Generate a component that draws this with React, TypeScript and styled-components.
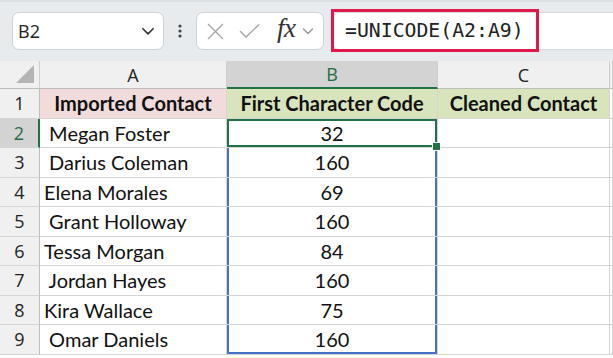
import React from 'react';
import styled, { createGlobalStyle, css } from 'styled-components';

const GlobalStyle = createGlobalStyle`
  html, body {
    margin: 0;
    padding: 0;
    background: #ffffff;
    overflow: hidden;
  }
`;

const Page = styled.div`
  width: 613px;
  height: 358px;
  display: flex;
  flex-direction: column;
  overflow: hidden;
  font-family: 'Lato', 'Noto Sans', sans-serif;
`;

const Toolbar = styled.div`
  height: 61px;
  flex: none;
  box-sizing: border-box;
  background: #e8ebee;
  border-top: 2px solid #dcdfe2;
  display: flex;
  align-items: center;
  padding: 0 0 1px 12px;
`;

const NameBox = styled.div`
  width: 152px;
  height: 38px;
  box-sizing: border-box;
  background: #fff;
  border: 1px solid #cfd2d5;
  border-radius: 7px;
  display: flex;
  align-items: center;
  justify-content: space-between;
  padding: 0 7px 0 5px;
  font-family: 'Open Sans', 'Noto Sans', sans-serif;
  font-size: 18px;
  color: #222;
`;

const Dots = styled.div`
  width: 32px;
  display: flex;
  justify-content: center;
`;

const FxBox = styled.div`
  width: 128px;
  height: 38px;
  box-sizing: border-box;
  background: #fff;
  border: 1px solid #cfd2d5;
  border-radius: 7px;
  display: flex;
  align-items: center;
  padding: 0 0 0 9px;
`;

const ToolIcon = styled.svg<{ $gap?: number }>`
  flex: none;
  margin-left: ${({ $gap }) => $gap || 0}px;
`;

const FxLabel = styled.span`
  font-family: 'Liberation Serif', serif;
  font-style: italic;
  font-size: 27px;
  color: #333;
  margin: -5px 5px 0 17px;
  letter-spacing: -0.5px;
`;

const FormulaBar = styled.div`
  flex: 1;
  height: 38px;
  margin-left: 8px;
  box-sizing: border-box;
  background: #fff;
  border: 1px solid #d6d9dc;
  border-right: none;
  border-radius: 7px 0 0 7px;
  position: relative;
  display: flex;
  align-items: center;
`;

const FormulaHighlight = styled.div`
  position: absolute;
  left: -2px;
  top: -4px;
  width: 208px;
  height: 43px;
  box-sizing: border-box;
  border: 3px solid #e0194b;
  display: flex;
  align-items: center;
  padding-left: 11px;
  font-family: 'DejaVu Sans Mono', 'Liberation Mono', monospace;
  font-size: 19.8px;
  color: #222;
`;

const Sheet = styled.div`
  display: grid;
  grid-template-columns: 40px 187px 211px 172px 1fr;
  grid-template-rows: 28px repeat(9, 29.5px);
`;

type CellKind = 'corner' | 'colHead' | 'rowHead' | 'data';

interface CellProps {
  $kind: CellKind;
  $bg?: string;
  $align?: 'left' | 'center';
  $bold?: boolean;
  $active?: boolean;
  $range?: 'mid' | 'last';
}

const Cell = styled.div<CellProps>`
  position: relative;
  box-sizing: border-box;
  border-right: 1px solid #d4d4d4;
  border-bottom: 1px solid #d4d4d4;
  display: flex;
  align-items: center;
  justify-content: ${({ $align }) => ($align === 'left' ? 'flex-start' : 'center')};
  padding: ${({ $align }) => ($align === 'left' ? '0 0 0 4px' : '0')};
  background: ${({ $bg }) => $bg || '#fff'};
  font-size: 20px;
  font-weight: ${({ $bold }) => ($bold ? 700 : 400)};
  color: #111;
  white-space: pre;
  ${({ $kind }) =>
    ($kind === 'colHead' || $kind === 'corner') &&
    css`
      font-family: 'Open Sans', 'Noto Sans', sans-serif;
      font-size: 18px;
      color: #222;
      border-right-color: #cfcfcf;
      border-bottom: 1px solid #bdbdbd;
    `}
  ${({ $kind }) =>
    $kind === 'rowHead' &&
    css`
      font-family: 'Open Sans', 'Noto Sans', sans-serif;
      font-size: 18px;
      color: #222;
      border-right: 1px solid #bdbdbd;
    `}
  ${({ $active, $kind }) =>
    $active &&
    $kind === 'colHead' &&
    css`
      color: #1e6e41;
      border-bottom: 2px solid #217346;
    `}
  ${({ $active, $kind }) =>
    $active &&
    $kind === 'rowHead' &&
    css`
      color: #1e6e41;
      border-right: 2px solid #217346;
    `}
  ${({ $active, $kind }) =>
    $active &&
    $kind === 'data' &&
    css`
      box-shadow: inset 0 0 0 2px #217346;
    `}
  ${({ $range }) =>
    $range === 'mid' &&
    css`
      box-shadow: inset 2px 0 0 #4472c4, inset -2px 0 0 #4472c4;
    `}
  ${({ $range }) =>
    $range === 'last' &&
    css`
      box-shadow: inset 2px 0 0 #4472c4, inset -2px 0 0 #4472c4, inset 0 -2px 0 #4472c4;
    `}
`;

const FillHandle = styled.span`
  position: absolute;
  right: -4px;
  bottom: -4px;
  width: 7px;
  height: 7px;
  background: #217346;
  border: 1px solid #fff;
  z-index: 2;
`;

const CornerMark = styled.svg`
  position: absolute;
  right: 5px;
  bottom: 5px;
`;

const Chevron: React.FC<{ size?: number; color?: string }> = ({ size = 14, color = '#333' }) => (
  <svg width={size} height={size} viewBox="0 0 14 14" fill="none">
    <path d="M2.5 5 L7 9.5 L11.5 5" stroke={color} strokeWidth="1.4" strokeLinecap="round" strokeLinejoin="round" />
  </svg>
);

const rows: [string, string][] = [
  [' Megan Foster', '32'],
  [' Darius Coleman', '160'],
  ['Elena Morales', '69'],
  [' Grant Holloway', '160'],
  ['Tessa Morgan', '84'],
  [' Jordan Hayes', '160'],
  ['Kira Wallace', '75'],
  [' Omar Daniels', '160'],
];

const App: React.FC = () => (
  <Page>
    <GlobalStyle />
    <Toolbar>
      <NameBox>
        <span>B2</span>
        <Chevron size={16} />
      </NameBox>
      <Dots>
        <svg width="4" height="14" viewBox="0 0 4 14">
          <circle cx="2" cy="2" r="1.6" fill="#444" />
          <circle cx="2" cy="7" r="1.6" fill="#444" />
          <circle cx="2" cy="12" r="1.6" fill="#444" />
        </svg>
      </Dots>
      <FxBox>
        <ToolIcon width="19" height="19" viewBox="0 0 19 19">
          <path d="M2 2 L17 17 M17 2 L2 17" stroke="#a3a3a3" strokeWidth="1.3" />
        </ToolIcon>
        <ToolIcon $gap={14} width="21" height="16" viewBox="0 0 21 16">
          <path d="M1 8 L7 14 L20 1.5" stroke="#a3a3a3" strokeWidth="1.3" fill="none" />
        </ToolIcon>
        <FxLabel>fx</FxLabel>
        <Chevron size={14} color="#999" />
      </FxBox>
      <FormulaBar>
        <FormulaHighlight>=UNICODE(A2:A9)</FormulaHighlight>
      </FormulaBar>
    </Toolbar>
    <Sheet>
      <Cell $kind="corner" $bg="#f0f0f0">
        <CornerMark width="18" height="18" viewBox="0 0 18 18">
          <path d="M18 0 L18 18 L0 18 Z" fill="#b4b4b4" />
        </CornerMark>
      </Cell>
      <Cell $kind="colHead" $bg="#f0f0f0">A</Cell>
      <Cell $kind="colHead" $bg="#d3d3d3" $active>B</Cell>
      <Cell $kind="colHead" $bg="#f0f0f0">C</Cell>
      <Cell $kind="colHead" $bg="#f0f0f0" />

      <Cell $kind="rowHead" $bg="#f0f0f0">1</Cell>
      <Cell $kind="data" $bg="#f2dcdb" $bold>Imported Contact</Cell>
      <Cell $kind="data" $bg="#d8e4bc" $bold>First Character Code</Cell>
      <Cell $kind="data" $bg="#d8e4bc" $bold>Cleaned Contact</Cell>
      <Cell $kind="data" />

      {rows.map(([name, code], i) => {
        const first = i === 0;
        const last = i === rows.length - 1;
        return (
          <React.Fragment key={name}>
            <Cell $kind="rowHead" $bg={first ? '#d3d3d3' : '#f0f0f0'} $active={first}>
              {i + 2}
            </Cell>
            <Cell $kind="data" $align="left">{name}</Cell>
            <Cell $kind="data" $active={first} $range={first ? undefined : last ? 'last' : 'mid'}>
              {code}
              {first && <FillHandle />}
            </Cell>
            <Cell $kind="data" />
            <Cell $kind="data" />
          </React.Fragment>
        );
      })}
    </Sheet>
  </Page>
);

export default App;
